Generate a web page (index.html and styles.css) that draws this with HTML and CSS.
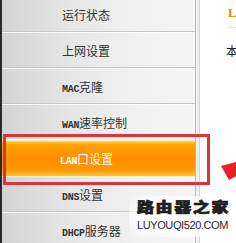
FILE: index.html
```html
<!DOCTYPE html>
<html lang="zh-CN">
<head>
<meta charset="utf-8">
<title>LAN口设置</title>
<link rel="stylesheet" href="styles.css">
</head>
<body>
<div class="page">
  <nav class="menu">
    <div class="item">运行状态</div>
    <div class="item">上网设置</div>
    <div class="item"><span class="lat">MAC</span>克隆</div>
    <div class="item"><span class="lat">WAN</span>速率控制</div>
    <div class="item active"><span class="lat">LAN</span>口设置</div>
    <div class="item"><span class="lat">DNS</span>设置</div>
    <div class="item"><span class="lat">DHCP</span>服务器</div>
  </nav>
  <div class="gutter"></div>
  <main class="content">
    <h2 class="title">LAN口设置</h2>
    <p class="desc">本页设置LAN口的基本网络参数。</p>
  </main>
</div>
<div class="highlight"></div>
<svg class="arrow" width="24" height="28" viewBox="0 0 24 28"><polygon points="5,8 24,3 24,16 13,22" fill="#e3222b"/></svg>
<div class="watermark">
  <div class="wm-cn">路由器之家</div>
  <div class="wm-en">LUYOUQI520.COM</div>
</div>
</body>
</html>
```
FILE: styles.css
```css
html, body {
  margin: 0;
  padding: 0;
  background: #fff;
  overflow: hidden;
}
body {
  width: 236px;
  height: 243px;
  position: relative;
  font-family: "Noto Sans CJK SC", sans-serif;
}
.page {
  display: flex;
  align-items: flex-start;
  height: 243px;
  overflow: hidden;
}
.menu {
  flex: 0 0 193px;
  margin-top: -3px;
  border-left: 2px solid #2a2a2a;
  border-right: 1px solid #bcbcbc;
  background: linear-gradient(to right, #d3d3d3, #e6e6e6 35%, #f1f1f1 70%, #f5f5f5);
}
.item {
  height: 35px;
  line-height: 35px;
  padding-left: 60px;
  font-size: 12px;
  color: #333;
  border-bottom: 1px solid #fbfbfb;
  box-shadow: inset 0 -1px 0 #c6c6c6;
  white-space: nowrap;
}
.lat {
  font-family: "Liberation Mono", monospace;
  font-size: 10px;
  font-weight: 700;
  letter-spacing: -0.3px;
}
.item.active {
  color: #fff;
  padding-left: 58px;
  background: linear-gradient(#ffd75a 0, #ffa400 10%, #ff8f00 50%, #ff9800 82%, #ffc23a 100%);
  border-bottom-color: #fff6d8;
  box-shadow: 0 -2px 0 #fff2c4;
}
.gutter {
  flex: 0 0 3px;
  height: 243px;
  background: #f0f0f0;
  border-right: 1px solid #d4d4d4;
}
.content {
  flex: 1;
  min-width: 0;
  overflow: hidden;
  padding: 5px 0 0 28px;
  white-space: nowrap;
}
.title {
  margin: 0;
  font-family: "Liberation Serif", "Noto Sans CJK SC", serif;
  font-weight: 700;
  font-size: 13px;
  line-height: 16px;
  color: #f08a00;
  padding-bottom: 6px;
  border-bottom: 1px solid #eadfd0;
}
.desc {
  margin: 15px 0 0 -2px;
  font-size: 12px;
  line-height: 16px;
  color: #222;
}
.highlight {
  position: absolute;
  left: 3px;
  top: 134px;
  width: 207px;
  height: 51px;
  box-sizing: border-box;
  border: 3px solid #d6373e;
}
.arrow {
  position: absolute;
  left: 216px;
  top: 158px;
}
.watermark {
  position: absolute;
  left: 129px;
  top: 196px;
  padding: 4px 6px 6px 8px;
  background: radial-gradient(ellipse at center, rgba(255,255,255,0.85) 55%, rgba(255,255,255,0) 100%);
}
.wm-cn {
  font-weight: 900;
  font-size: 17px;
  line-height: 18px;
  color: #1e1e1e;
  letter-spacing: 1.6px;
  -webkit-text-stroke: 0.9px #1e1e1e;
  transform: scaleY(0.78);
  transform-origin: left top;
  white-space: nowrap;
}
.wm-en {
  font-family: "Liberation Sans", sans-serif;
  font-size: 11px;
  line-height: 12px;
  letter-spacing: -0.4px;
  color: #2a2a2a;
  margin-top: 1px;
  white-space: nowrap;
}
```
